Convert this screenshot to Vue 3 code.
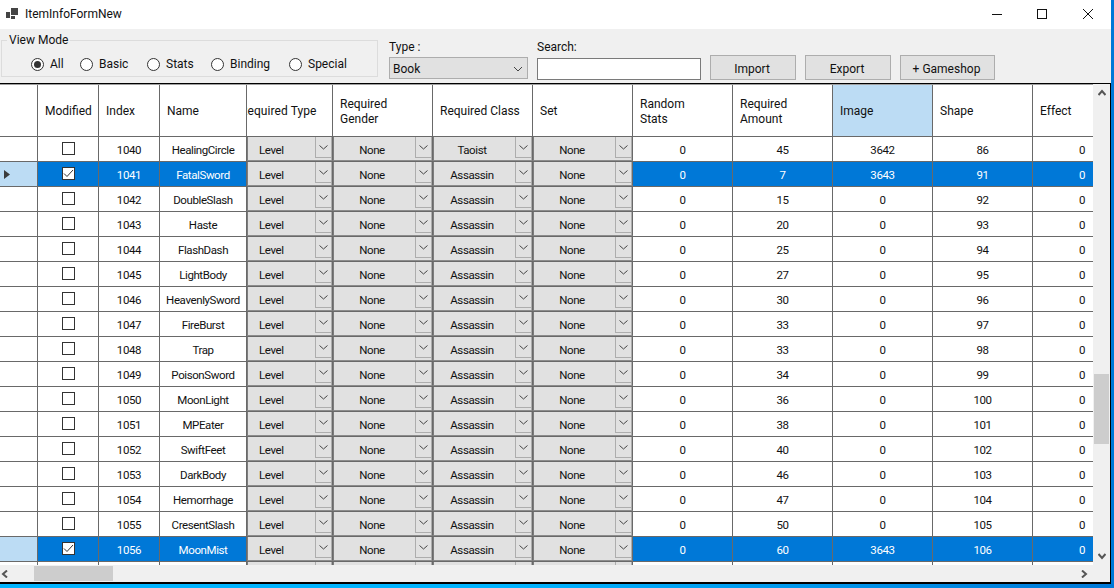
<script setup>
const radios = [
  { label: 'All', w: 49, on: true },
  { label: 'Basic', w: 67 },
  { label: 'Stats', w: 64 },
  { label: 'Binding', w: 78 },
  { label: 'Special', w: 70 },
]
const names = ['HealingCircle','FatalSword','DoubleSlash','Haste','FlashDash','LightBody','HeavenlySword','FireBurst','Trap','PoisonSword','MoonLight','MPEater','SwiftFeet','DarkBody','Hemorrhage','CresentSlash','MoonMist','']
const amounts = [45,7,15,20,25,27,30,33,33,34,36,38,40,46,47,50,60,'']
const shapes = [86,91,92,93,94,95,96,97,98,99,100,101,102,103,104,105,106,'']
const rows = names.map((name, i) => ({
  index: name ? 1040 + i : '',
  name,
  sel: i === 1 || i === 16,
  cls: !name ? '' : i === 0 ? 'Taoist' : 'Assassin',
  type: name ? 'Level' : '',
  none: name ? 'None' : '',
  zero: name ? 0 : '',
  amount: amounts[i],
  image: i === 0 ? 3642 : i === 1 || i === 16 ? 3643 : name ? 0 : '',
  shape: shapes[i],
  arrow: i === 1,
}))
</script>

<template>
  <div class="page">
    <div class="window">
      <header class="titlebar">
        <svg class="appicon" width="14" height="12" viewBox="0 0 14 12">
          <rect x="0" y="4" width="4" height="6" fill="#444" />
          <rect x="5" y="0" width="7" height="7" fill="#444" />
          <rect x="5" y="8" width="4" height="3" fill="#444" />
        </svg>
        <span class="title">ItemInfoFormNew</span>
        <div class="winbtns">
          <svg width="10" height="10" viewBox="0 0 10 10"><path d="M0 5.5H10" stroke="#111" fill="none" /></svg>
          <svg width="10" height="10" viewBox="0 0 10 10"><rect x=".5" y=".5" width="9" height="9" stroke="#111" fill="none" /></svg>
          <svg width="10" height="10" viewBox="0 0 10 10"><path d="M0 0L10 10M10 0L0 10" stroke="#111" fill="none" /></svg>
        </div>
      </header>

      <section class="toolbar">
        <fieldset class="group">
          <legend>View Mode</legend>
          <label v-for="r in radios" :key="r.label" class="radio" :style="{ width: r.w + 'px' }">
            <span class="dot" :class="{ on: r.on }"></span>{{ r.label }}
          </label>
        </fieldset>
        <div class="field typefield">
          <span class="fieldlabel">Type :</span>
          <div class="select">Book
            <svg width="10" height="6" viewBox="0 0 10 6"><path d="M1 1L5 5L9 1" stroke="#444" fill="none" /></svg>
          </div>
        </div>
        <div class="field searchfield">
          <span class="fieldlabel">Search:</span>
          <div class="input"></div>
        </div>
        <button class="btn import">Import</button>
        <button class="btn export">Export</button>
        <button class="btn gameshop">+ Gameshop</button>
      </section>

      <section class="gridarea">
        <div class="gridmain">
          <div class="viewport">
            <div class="row head">
              <div class="c rh"></div>
              <div class="c">Modified</div>
              <div class="c">Index</div>
              <div class="c">Name</div>
              <div class="c clip"><span>Required Type</span></div>
              <div class="c">Required<br />Gender</div>
              <div class="c">Required Class</div>
              <div class="c">Set</div>
              <div class="c">Random<br />Stats</div>
              <div class="c">Required<br />Amount</div>
              <div class="c active">Image</div>
              <div class="c">Shape</div>
              <div class="c">Effect</div>
            </div>
            <div v-for="r in rows" :key="r.index + r.name" class="row body" :class="{ sel: r.sel }">
              <div class="c rh">
                <svg v-if="r.arrow" width="6" height="9" viewBox="0 0 6 9"><path d="M0 0L6 4.5L0 9Z" fill="#3c3c3c" /></svg>
              </div>
              <div class="c mid">
                <span v-if="r.name" class="check">
                  <svg v-if="r.sel" width="11" height="9" viewBox="0 0 11 9"><path d="M1 4.5L4 7.5L10 1" stroke="#333" fill="none" /></svg>
                </span>
              </div>
              <div class="c mid">{{ r.index }}</div>
              <div class="c mid">{{ r.name }}</div>
              <div class="c combo left"><span>{{ r.type }}</span><i><svg width="9" height="5" viewBox="0 0 9 5"><path d="M.5 .5L4.5 4L8.5 .5" stroke="#444" fill="none" /></svg></i></div>
              <div class="c combo"><span>{{ r.none }}</span><i><svg width="9" height="5" viewBox="0 0 9 5"><path d="M.5 .5L4.5 4L8.5 .5" stroke="#444" fill="none" /></svg></i></div>
              <div class="c combo"><span>{{ r.cls }}</span><i><svg width="9" height="5" viewBox="0 0 9 5"><path d="M.5 .5L4.5 4L8.5 .5" stroke="#444" fill="none" /></svg></i></div>
              <div class="c combo"><span>{{ r.none }}</span><i><svg width="9" height="5" viewBox="0 0 9 5"><path d="M.5 .5L4.5 4L8.5 .5" stroke="#444" fill="none" /></svg></i></div>
              <div class="c mid">{{ r.zero }}</div>
              <div class="c mid">{{ r.amount }}</div>
              <div class="c mid">{{ r.image }}</div>
              <div class="c mid">{{ r.shape }}</div>
              <div class="c end">{{ r.zero }}</div>
            </div>
          </div>
          <div class="hbar">
            <svg width="8" height="8" viewBox="0 0 8 8"><path d="M6 .5L2 4L6 7.5" stroke="#555" stroke-width="2" fill="none" /></svg>
            <div class="hthumb"></div>
            <svg class="hright" width="8" height="8" viewBox="0 0 8 8"><path d="M2 .5L6 4L2 7.5" stroke="#555" stroke-width="2" fill="none" /></svg>
          </div>
        </div>
        <div class="vbar">
          <svg class="vup" width="8" height="8" viewBox="0 0 8 8"><path d="M.5 6L4 2L7.5 6" stroke="#555" stroke-width="2" fill="none" /></svg>
          <div class="vthumb"></div>
          <svg class="vdown" width="8" height="8" viewBox="0 0 8 8"><path d="M.5 2L4 6L7.5 2" stroke="#555" stroke-width="2" fill="none" /></svg>
        </div>
      </section>
    </div>
  </div>
</template>

<style scoped>
.page {
  width: 1114px;
  height: 588px;
  overflow: hidden;
  background: linear-gradient(90deg, #00b4ff 0, #00b4ff 45%, #0078d7 100%);
  font-family: Roboto, "Open Sans", "Liberation Sans", sans-serif;
  font-size: 12px;
  color: #111;
}
.window {
  width: 1111px;
  height: 584px;
  display: flex;
  flex-direction: column;
  background: #f0f0f0;
}
.titlebar {
  height: 29px;
  flex: none;
  background: #fff;
  display: flex;
  align-items: center;
  padding: 0 0 2px 6px;
  box-sizing: border-box;
}
.appicon { margin-right: 5px; }
.title { font-size: 12px; }
.winbtns {
  margin-left: auto;
  margin-right: 18px;
  display: flex;
  gap: 35px;
}
.winbtns svg:last-child { margin-left: 1px; }
.toolbar {
  height: 54px;
  flex: none;
  display: flex;
  align-items: flex-start;
  background: #f0f0f0;
  position: relative;
}
.group {
  margin: 11px 11px 0 1px;
  padding: 14px 0 0 29px;
  width: 377px;
  height: 37px;
  box-sizing: border-box;
  border: 1px solid #dcdcdc;
  display: flex;
  min-inline-size: 0;
}
.group legend {
  padding: 0 2px;
  margin-left: 6px;
  position: absolute;
  top: 4px;
  left: 1px;
  background: #f0f0f0;
  line-height: 14px;
}
.radio {
  display: flex;
  align-items: center;
  height: 18px;
  gap: 6px;
  flex: none;
}
.dot {
  width: 13px;
  height: 13px;
  box-sizing: border-box;
  border: 1px solid #333;
  border-radius: 50%;
  background: #fff;
  flex: none;
  display: grid;
  place-items: center;
}
.dot.on::after {
  content: "";
  width: 7px;
  height: 7px;
  border-radius: 50%;
  background: #333;
}
.field { display: flex; flex-direction: column; }
.fieldlabel { height: 15px; line-height: 15px; }
.typefield { margin: 11px 9px 0 0; width: 139px; gap: 2px; }
.searchfield { margin: 11px 9px 0 0; width: 164px; gap: 3px; }
.select {
  height: 22px;
  box-sizing: border-box;
  border: 1px solid #adadad;
  background: #e1e1e1;
  display: flex;
  align-items: center;
  justify-content: space-between;
  padding: 2px 4px 0 3px;
  font-size: 12px;
}
.input {
  height: 22px;
  box-sizing: border-box;
  border: 1px solid #7a7a7a;
  background: #fff;
}
.btn {
  margin: 26px 9px 0 0;
  height: 25px;
  box-sizing: border-box;
  padding: 2px 2px 0 0;
  border: 1px solid #adadad;
  background: #e1e1e1;
  font: inherit;
  font-size: 12px;
  color: #111;
}
.import, .export { width: 86px; }
.gameshop { width: 95px; margin-right: 0; }
.gridarea {
  flex: 1;
  min-height: 0;
  display: flex;
  border: solid #000;
  border-width: 1px 1px 2px 0;
  background: #f0f0f0;
}
.gridmain {
  flex: none;
  width: 1093px;
  display: flex;
  flex-direction: column;
  min-height: 0;
}
.viewport {
  flex: 1;
  min-height: 0;
  overflow: hidden;
  background: #fff;
}
.row {
  display: grid;
  grid-template-columns: 38px 61px 61px 87px 86px 100px 100px 100px 100px 100px 100px 100px 60px;
  height: 25px;
  box-sizing: border-box;
  border-bottom: 1px solid #696969;
}
.row.head { height: 53px; border-top: 1px solid #a0a0a0; }
.head .c {
  display: flex;
  align-items: center;
  padding: 2px 0 0 7px;
  line-height: 15px;
}
.head .clip { overflow: hidden; padding-left: 0; white-space: nowrap; }
.head .clip span { margin-left: -7px; letter-spacing: .08px; }
.head .active { background: #bcdcf4; }
.c {
  box-sizing: border-box;
  border-right: 1px solid #696969;
  overflow: hidden;
  white-space: nowrap;
  min-width: 0;
}
.c:last-child { border-right: 0; }
.body .c {
  line-height: 27px;
  font-size: 11.5px;
  letter-spacing: -.4px;
}
.mid { text-align: center; }
.end { text-align: right; padding-right: 8px; }
.rh { display: flex; align-items: center; padding-left: 4px; }
.sel { background: #0078d7; color: #fff; }
.sel .rh { background: #bcdcf4; color: #111; }
.check {
  display: inline-flex;
  align-items: center;
  justify-content: center;
  width: 13px;
  height: 13px;
  margin-top: 5px;
  box-sizing: border-box;
  border: 1px solid #333;
  background: #fff;
  vertical-align: top;
}
.body .combo {
  position: relative;
  background: #e1e1e1;
  color: #111;
  border-style: solid;
  border-width: 0 1px 1px 1px;
  border-color: #e1e1e1 #696969 #8c8c8c #7d7d7d;
  box-shadow: inset -1px 0 #adadad;
  text-align: center;
  padding-right: 22px;
  line-height: 27px;
}
.body .combo.left { text-align: left; padding: 0 0 0 11px; }
.combo i {
  position: absolute;
  top: 0;
  right: 0;
  width: 17px;
  height: 21px;
  box-sizing: border-box;
  border: 1px solid #adadad;
  border-width: 0 1px 1px 1px;
  display: grid;
  place-items: center;
}
.hbar {
  flex: none;
  height: 17px;
  display: flex;
  align-items: center;
  position: relative;
  padding-left: 1px;
  background: #f0f0f0;
}
.hthumb {
  width: 79px;
  height: 15px;
  margin-left: 25px;
  background: #cdcdcd;
}
.hright { margin-left: auto; margin-right: 5px; }
.vbar {
  flex: 1;
  position: relative;
  background: #f0f0f0;
}
.vthumb {
  position: absolute;
  top: 290px;
  left: 1px;
  width: 15px;
  height: 70px;
  background: #cdcdcd;
}
.vup { position: absolute; top: 5px; left: 5px; }
.vdown { position: absolute; bottom: 22px; left: 5px; }
</style>

<style>
html, body { margin: 0; background: #0078d7; }
</style>
